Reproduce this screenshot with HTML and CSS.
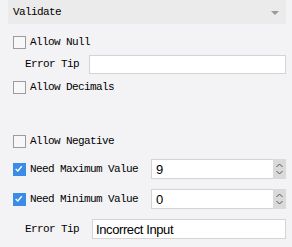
FILE: index.html
```html
<!DOCTYPE html>
<html lang="en">
<head>
    <meta charset="UTF-8">
    <title>Validate</title>
    <link rel="stylesheet" href="styles.css">
</head>
<body>
    <div class="header">
        <span>Validate</span>
        <span class="caret"></span>
    </div>

    <div class="row r1">
        <span class="box"></span><span class="label">Allow Null</span>
    </div>
    <div class="row r2">
        <span class="tip">Error Tip</span>
        <input class="text tip-top" type="text">
    </div>
    <div class="row r3">
        <span class="box"></span><span class="label">Allow Decimals</span>
    </div>
    <div class="row r4">
        <span class="box"></span><span class="label">Allow Negative</span>
    </div>
    <div class="row r5">
        <span class="box on"><svg viewBox="0 0 13 13"><path d="M3 6.8 L5.5 9.3 L10.2 3.6" /></svg></span>
        <span class="label wide">Need Maximum Value</span>
        <div class="spin">
            <input class="num" type="text" value="9">
            <span class="arrows"><svg viewBox="0 0 13 20"><path d="M3.5 8 L6.5 5 L9.5 8 M3.5 12 L6.5 15 L9.5 12" /></svg></span>
        </div>
    </div>
    <div class="row r6">
        <span class="box on"><svg viewBox="0 0 13 13"><path d="M3 6.8 L5.5 9.3 L10.2 3.6" /></svg></span>
        <span class="label wide">Need Minimum Value</span>
        <div class="spin">
            <input class="num" type="text" value="0">
            <span class="arrows"><svg viewBox="0 0 13 20"><path d="M3.5 8 L6.5 5 L9.5 8 M3.5 12 L6.5 15 L9.5 12" /></svg></span>
        </div>
    </div>
    <div class="row r7">
        <span class="tip">Error Tip</span>
        <input class="text tip-bottom" type="text" value="Incorrect Input">
    </div>
</body>
</html>
```

FILE: styles.css
```css
body { margin: 0; background: #f3f3f5; font-family: "Liberation Mono", "DejaVu Sans Mono", monospace; font-size: 11px; letter-spacing: -0.6px; color: #000; }
.header { height: 24px; margin: 0 6px 0 8px; padding: 0 7px 0 5px; background: #ebebeb; display: flex; align-items: center; justify-content: space-between; }
.caret { width: 0; height: 0; border-left: 4px solid transparent; border-right: 4px solid transparent; border-top: 4px solid #9a9a9a; margin-top: 1px; }

.row { height: 20px; display: flex; align-items: center; padding-left: 13px; margin-right: 6px; white-space: nowrap; }
.r1 { margin-top: 8px; }
.r2 { margin-top: 2px; }
.r3 { margin-top: 3px; }
.r4 { margin-top: 34px; }
.r5 { margin-top: 8px; }
.r6 { margin-top: 10px; }
.r7 { margin-top: 10px; }

.box { width: 11px; height: 11px; border: 1px solid #9c9c9c; background: #f7f7f8; flex: none; }
.box.on { background: #3b8ce6; border-color: #3b8ce6; }
.box svg { display: block; width: 11px; height: 11px; overflow: visible; }
.box svg path { fill: none; stroke: #fff; stroke-width: 1.6; transform: translate(-1px, -1px); }
.label { margin-left: 4px; flex: none; }
.wide { width: 121px; }

.tip { margin-left: 12px; width: 64px; flex: none; }
.text { min-width: 0; height: 19px; box-sizing: border-box; border: 1px solid #d4d4d4; background: #fff; outline: none; padding: 0 3px; font-family: "Liberation Sans", Arial, sans-serif; font-size: 13px; letter-spacing: -0.4px; color: #000; }
.tip-top { flex: 1; margin-left: 0; }
.tip-bottom { flex: 1; margin-left: 3px; height: 20px; }

.spin { flex: 1; min-width: 0; height: 20px; display: flex; }
.num { flex: 1; min-width: 0; height: 20px; box-sizing: border-box; border: 1px solid #d4d4d4; border-right: none; background: #fff; outline: none; padding: 0 4px; font-family: "Liberation Sans", Arial, sans-serif; font-size: 13px; color: #000; }
.arrows { width: 13px; height: 20px; background: #dadada; flex: none; }
.arrows svg { display: block; width: 13px; height: 20px; }
.arrows path { fill: none; stroke: #555; stroke-width: 1; }
```
